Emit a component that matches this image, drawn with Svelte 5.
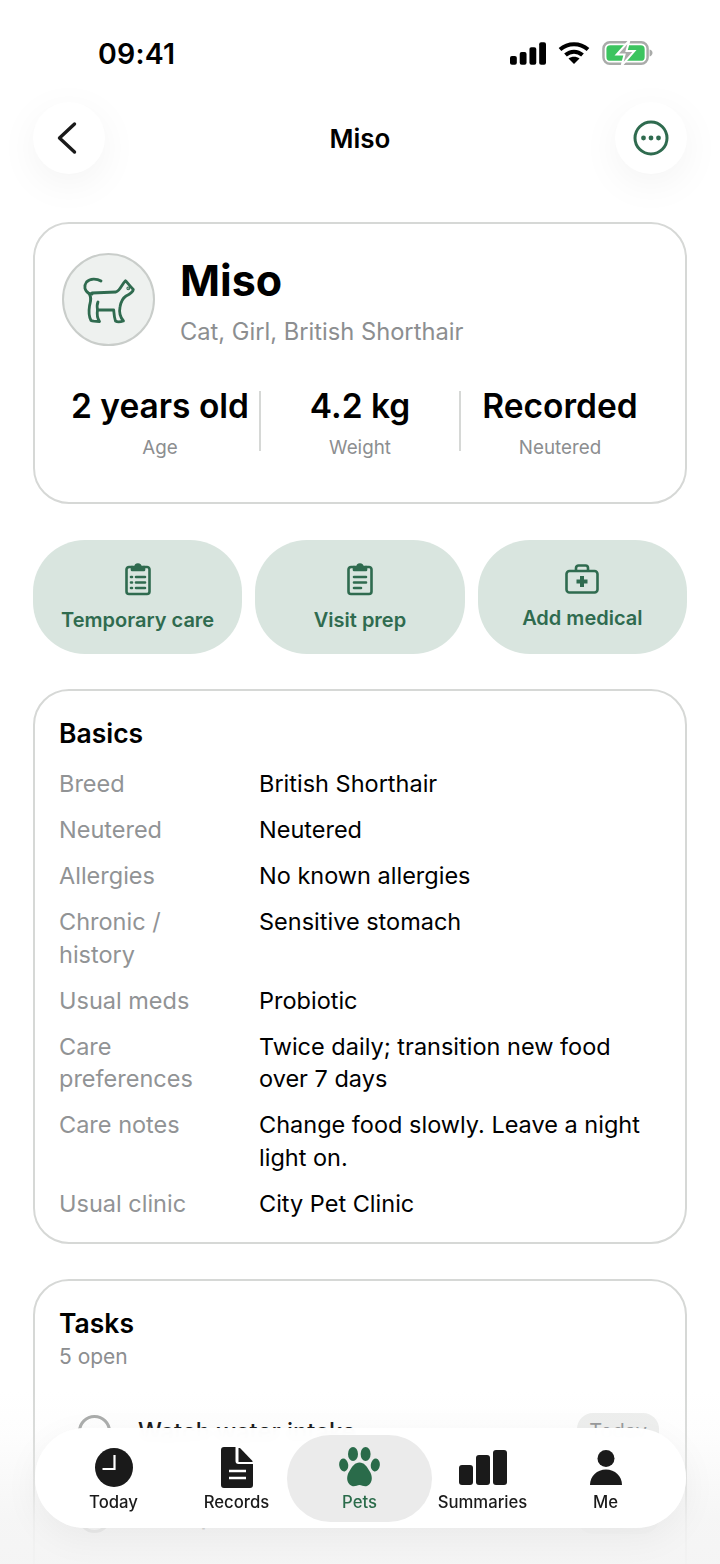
<script>
	const stats = [
		{ value: '2 years old', label: 'Age' },
		{ value: '4.2 kg', label: 'Weight' },
		{ value: 'Recorded', label: 'Neutered' }
	];

	const basics = [
		['Breed', 'British Shorthair'],
		['Neutered', 'Neutered'],
		['Allergies', 'No known allergies'],
		['Chronic / history', 'Sensitive stomach'],
		['Usual meds', 'Probiotic'],
		['Care preferences', 'Twice daily; transition new food over 7 days'],
		['Care notes', 'Change food slowly. Leave a night light on.'],
		['Usual clinic', 'City Pet Clinic']
	];

	const tasks = [
		{ title: 'Watch water intake', due: 'Today' },
		{ title: 'Refill probiotic', due: 'Today' }
	];
</script>

<div class="screen">
	<div class="status">
		<span class="time">09:41</span>
		<div class="status-icons">
			<svg width="36" height="24" viewBox="0 0 37 24" fill="#000">
				<rect x="0" y="15" width="7" height="9" rx="2" />
				<rect x="10" y="11" width="7" height="13" rx="2" />
				<rect x="20" y="6" width="7" height="18" rx="2" />
				<rect x="30" y="1" width="7" height="23" rx="2" />
			</svg>
			<svg width="32" height="24" viewBox="0 0 32 24" fill="none" stroke="#000" stroke-width="4">
				<path d="M2 8.500C10 1.500 22 1.500 30 8.500" />
				<path d="M7.500 14C12.500 9.500 19.500 9.500 24.500 14" />
				<path d="M16 23l-5.500-5.500C13.500 15 18.500 15 21.500 17.500z" fill="#000" stroke="none" />
			</svg>
			<svg width="51" height="26" viewBox="0 0 52 26">
				<rect x="1.500" y="2" width="45" height="22" rx="6.500" fill="none" stroke="#a9aba9" stroke-width="2.500" />
				<rect x="4.500" y="5" width="39" height="16" rx="4" fill="#3cc45f" />
				<path d="M48.500 9.500c2 .5 3 2 3 3.500s-1 3-3 3.500z" fill="#a9aba9" />
				<path d="M28 0L15 14.500h8L20 26l13-15h-8z" fill="#a9aba9" stroke="#fff" stroke-width="2" />
			</svg>
		</div>
	</div>

	<header class="nav">
		<button class="round" aria-label="Back">
			<svg width="36" height="36" viewBox="0 0 36 36" fill="none" stroke="#1a1a1a" stroke-width="3.400" stroke-linecap="round" stroke-linejoin="round">
				<path d="M23.500 4L8.500 18l15 14" />
			</svg>
		</button>
		<h1>Miso</h1>
		<button class="round" aria-label="More">
			<svg width="36" height="36" viewBox="0 0 36 36">
				<circle cx="18" cy="18" r="16" fill="none" stroke="#2f6b4f" stroke-width="3" />
				<circle cx="10.500" cy="18" r="2.400" fill="#2f6b4f" />
				<circle cx="18" cy="18" r="2.400" fill="#2f6b4f" />
				<circle cx="25.500" cy="18" r="2.400" fill="#2f6b4f" />
			</svg>
		</button>
	</header>

	<main>
		<section class="card profile">
			<div class="who">
				<div class="avatar">
					<svg width="66" height="62" viewBox="0 0 66 62" fill="none" stroke="#2f6b4f" stroke-width="2.800" stroke-linecap="round" stroke-linejoin="round">
						<path d="M25 12C21 9.500 14 9 10.500 13C7.500 17 8.500 22 13 24.500L16 25" />
						<path d="M16 24L40 23C44 22 46 15 49.500 11.700C51 13 53 16 57.300 20.500C57 23 54 25 50 27C47 29 45 32 44 38C43 43 44 48 47.500 52C44 53 41 53 39.500 52C38 48 38 44 37.700 41H21.500C21 44 20.500 48 23.500 52.500C20 52.500 17 52.500 15 51.500C12.500 47 12.700 42 13.500 37C14.500 32 16 29 13 24.500" />
						<path d="M21.500 41C21 38 21 35 22 33" />
						<circle cx="52.300" cy="19.300" r=".5" fill="#2f6b4f" />
					</svg>
				</div>
				<div>
					<h2>Miso</h2>
					<p class="sub">Cat, Girl, British Shorthair</p>
				</div>
			</div>
			<div class="stats">
				{#each stats as stat, i}
					{#if i > 0}
						<div class="divider"></div>
					{/if}
					<div class="stat">
						<strong>{stat.value}</strong>
						<span>{stat.label}</span>
					</div>
				{/each}
			</div>
		</section>

		<div class="actions">
			<button class="action">
				<svg width="26" height="34" viewBox="0 0 26 34" fill="none" stroke="#2f6b4f" stroke-width="2.600" stroke-linecap="round" stroke-linejoin="round">
					<path d="M7 5H4a2.500 2.500 0 0 0-2.500 2.500v22A2.500 2.500 0 0 0 4 32h18a2.500 2.500 0 0 0 2.500-2.500v-22A2.500 2.500 0 0 0 22 5h-3" />
					<path d="M7 8V5h3.500a2.500 2.500 0 0 1 5 0H19v3z" fill="#2f6b4f" />
					<path d="M11 15h9M11 20.500h9M11 26h9M6 15h1M6 20.500h1M6 26h1" />
				</svg>
				<span>Temporary care</span>
			</button>
			<button class="action">
				<svg width="26" height="34" viewBox="0 0 26 34" fill="none" stroke="#2f6b4f" stroke-width="2.600" stroke-linecap="round" stroke-linejoin="round">
					<path d="M7 5H4a2.500 2.500 0 0 0-2.500 2.500v22A2.500 2.500 0 0 0 4 32h18a2.500 2.500 0 0 0 2.500-2.500v-22A2.500 2.500 0 0 0 22 5h-3" />
					<path d="M7 8V5h3.500a2.500 2.500 0 0 1 5 0H19v3z" fill="#2f6b4f" />
					<path d="M7 15h12M7 20.500h12M7 26h7" />
				</svg>
				<span>Visit prep</span>
			</button>
			<button class="action">
				<svg width="34" height="30" viewBox="0 0 34 30" fill="none" stroke="#2f6b4f" stroke-width="2.600" stroke-linejoin="round">
					<rect x="1.500" y="7" width="31" height="21.500" rx="3" />
					<path d="M11 7V4a2.500 2.500 0 0 1 2.500-2.500h7A2.500 2.500 0 0 1 23 4v3" />
					<path d="M17 12v11M11.500 17.500h11" stroke-width="4" />
				</svg>
				<span>Add medical</span>
			</button>
		</div>

		<section class="card basics">
			<h3>Basics</h3>
			<dl>
				{#each basics as [label, value]}
					<dt>{label}</dt>
					<dd>{value}</dd>
				{/each}
			</dl>
		</section>

		<section class="card tasks">
			<h3>Tasks</h3>
			<p class="open">5 open</p>
			<ul>
				{#each tasks as task}
					<li>
						<span class="check"></span>
						<span class="task-title">{task.title}</span>
						<span class="due">{task.due}</span>
					</li>
				{/each}
			</ul>
		</section>
	</main>

	<div class="fade"></div>

	<nav class="tabbar">
		<div class="tab">
			<div class="glyph">
				<svg width="38" height="39" viewBox="0 0 38 39">
					<ellipse cx="19" cy="19.500" rx="19" ry="19.500" fill="#1a1a1a" />
					<path d="M19.500 7v14h-12" fill="none" stroke="#fff" stroke-width="2.200" />
				</svg>
			</div>
			<span>Today</span>
		</div>
		<div class="tab">
			<div class="glyph">
				<svg width="32" height="41" viewBox="0 0 32 41" fill="#1a1a1a">
					<path d="M3 0h11.500v14a3 3 0 0 0 3 3H32v21a3 3 0 0 1-3 3H3a3 3 0 0 1-3-3V3a3 3 0 0 1 3-3z" />
					<path d="M17.500 1h1.500l12.500 13v1H17.500z" />
					<path d="M8 24h17M8 31h17" stroke="#fff" stroke-width="2.600" />
				</svg>
			</div>
			<span>Records</span>
		</div>
		<div class="tab active">
			<div class="glyph">
				<svg width="41" height="40" viewBox="0 0 41 40" fill="#2a6b4a">
					<ellipse cx="14" cy="7" rx="5" ry="7" />
					<ellipse cx="26.600" cy="7" rx="5" ry="7" />
					<ellipse cx="4.700" cy="18" rx="4.500" ry="6.500" transform="rotate(-8 4.700 18)" />
					<ellipse cx="36.300" cy="18" rx="4.500" ry="6.500" transform="rotate(8 36.300 18)" />
					<path d="M20.500 15.500c4.500 0 7 3.500 10 8.500 3 4.500 4 12-2.500 15-3 1-5-1-7.500-1s-4.500 2-7.500 1C6.500 36 7.500 28.500 10.500 24c3-5 5.500-8.500 10-8.500z" />
				</svg>
			</div>
			<span>Pets</span>
		</div>
		<div class="tab">
			<div class="glyph">
				<svg width="48" height="35" viewBox="0 0 48 35" fill="#1a1a1a">
					<rect x="0" y="15" width="14" height="20" rx="3" />
					<rect x="17" y="5" width="14" height="30" rx="3" />
					<rect x="34" y="0" width="14" height="35" rx="3" />
				</svg>
			</div>
			<span>Summaries</span>
		</div>
		<div class="tab">
			<div class="glyph">
				<svg width="32" height="35" viewBox="0 0 32 35" fill="#1a1a1a">
					<ellipse cx="16" cy="8.500" rx="8.500" ry="8.500" />
					<path d="M0 35c0-9 7-15.500 16-15.500S32 26 32 35z" />
				</svg>
			</div>
			<span>Me</span>
		</div>
	</nav>
</div>

<style>
	:global(body) {
		margin: 0;
		background: #fff;
	}

	.screen {
		position: relative;
		width: 720px;
		height: 1564px;
		overflow: hidden;
		background: #fff;
		color: #000;
		font-family: Inter, 'Liberation Sans', sans-serif;
	}

	.status {
		display: flex;
		align-items: center;
		justify-content: space-between;
		height: 28px;
		padding: 39px 67px 0 98px;
	}
	.time {
		font-size: 28.500px;
		font-weight: 600;
		letter-spacing: 0.2px;
	}
	.status-icons {
		display: flex;
		align-items: center;
		gap: 12px;
	}

	.nav {
		display: flex;
		align-items: center;
		justify-content: space-between;
		margin-top: 35px;
		padding: 0 33px;
	}
	.nav h1 {
		margin: 0;
		font-size: 26px;
		font-weight: 600;
	}
	.round {
		display: flex;
		align-items: center;
		justify-content: center;
		width: 72px;
		height: 72px;
		padding: 0;
		border: 0;
		border-radius: 50%;
		background: #fff;
		box-shadow: 0 10px 40px rgba(0, 0, 0, 0.05);
	}

	main {
		display: flex;
		flex-direction: column;
		gap: 35px;
		margin-top: 48px;
		padding: 0 33px;
	}

	.card {
		border: 2px solid #d6d8d6;
		border-radius: 36px;
		background: #fff;
	}

	.profile {
		height: 282px;
		box-sizing: border-box;
		padding: 29px 26px 0 27px;
	}
	.who {
		display: flex;
		gap: 25px;
	}
	.avatar {
		display: flex;
		align-items: center;
		justify-content: center;
		box-sizing: border-box;
		width: 93px;
		height: 93px;
		border: 2px solid #c9cdca;
		border-radius: 50%;
		background: #eef1ef;
	}
	.who h2 {
		margin: 0;
		font-size: 43px;
		line-height: 54px;
		font-weight: 700;
	}
	.sub {
		margin: 9px 0 0;
		font-size: 23.700px;
		line-height: 32px;
		color: #8c8e90;
	}

	.stats {
		display: grid;
		grid-template-columns: 1fr 2px 1fr 2px 1fr;
		margin: 38px 0 0 -1px;
	}
	.divider {
		height: 60px;
		margin-top: 5px;
		background: #d6d8d6;
	}
	.stat {
		display: flex;
		flex-direction: column;
		align-items: center;
		white-space: nowrap;
	}
	.stat strong {
		font-size: 33.500px;
		line-height: 40px;
		font-weight: 600;
	}
	.stat span {
		margin-top: 10px;
		font-size: 18.800px;
		line-height: 24px;
		color: #8c8e90;
	}

	.actions {
		display: grid;
		grid-template-columns: repeat(3, 1fr);
		gap: 13px;
		margin-top: 1px;
	}
	.action {
		display: flex;
		flex-direction: column;
		align-items: center;
		justify-content: center;
		gap: 12px;
		height: 114px;
		padding: 0;
		border: 0;
		border-radius: 52px;
		background: #d9e5df;
		color: #2f6b4f;
		font-family: inherit;
		font-size: 20px;
		font-weight: 600;
	}

	.basics {
		padding: 24px 26px 22px 24px;
	}
	h3 {
		margin: 0;
		font-size: 26.500px;
		line-height: 36px;
		font-weight: 600;
	}
	dl {
		display: grid;
		grid-template-columns: 174px 1fr;
		column-gap: 25px;
		row-gap: 13.500px;
		margin: 17px 0 0;
		font-size: 23.500px;
		line-height: 32.500px;
	}
	dt {
		color: #919395;
	}
	dd {
		margin: 0 0 0 1px;
	}

	.tasks {
		height: 400px;
		padding: 24px 26px 0 24px;
	}
	.open {
		margin: 2px 0 0;
		font-size: 21px;
		line-height: 28px;
		color: #8c8e90;
	}
	ul {
		display: flex;
		flex-direction: column;
		gap: 35px;
		margin: 35px 0 0;
		padding: 0 0 0 19px;
		list-style: none;
	}
	li {
		display: flex;
		align-items: center;
		gap: 27px;
		height: 50px;
	}
	.check {
		box-sizing: border-box;
		width: 33px;
		height: 33px;
		border: 3px solid #a3a5a4;
		border-radius: 50%;
	}
	.task-title {
		flex: 1;
		font-size: 23.800px;
		font-weight: 500;
	}
	.due {
		padding: 6px 12px;
		border-radius: 16px;
		background: #edeeed;
		color: #8c8e90;
		font-size: 20px;
	}

	.fade {
		position: absolute;
		left: 0;
		right: 0;
		bottom: 0;
		height: 174px;
		background: linear-gradient(rgba(244, 244, 244, 0), rgba(244, 244, 244, 0.15) 25%, rgba(244, 244, 244, 0.85) 75%, rgba(244, 244, 244, 0.95));
	}

	.tabbar {
		position: absolute;
		left: 35px;
		right: 34px;
		top: 1428px;
		display: flex;
		align-items: center;
		box-sizing: border-box;
		height: 100px;
		padding: 0 17px;
		border-radius: 50px;
		background: rgba(255, 255, 255, 0.975);
		backdrop-filter: blur(6px);
		box-shadow: 0 10px 36px rgba(0, 0, 0, 0.05);
	}
	.tab {
		display: flex;
		flex-direction: column;
		align-items: center;
		box-sizing: border-box;
		flex: none;
		width: 123px;
		height: 87px;
		padding-top: 12px;
		font-size: 16.700px;
		font-weight: 500;
		line-height: 22px;
		color: #1a1a1a;
	}
	.glyph {
		display: flex;
		align-items: center;
		justify-content: center;
		height: 41px;
		margin-bottom: 3px;
	}
	.tab.active {
		width: 145px;
		margin: 0 -11px;
		border-radius: 44px;
		background: #ebebeb;
		color: #2a6b4a;
	}
</style>
